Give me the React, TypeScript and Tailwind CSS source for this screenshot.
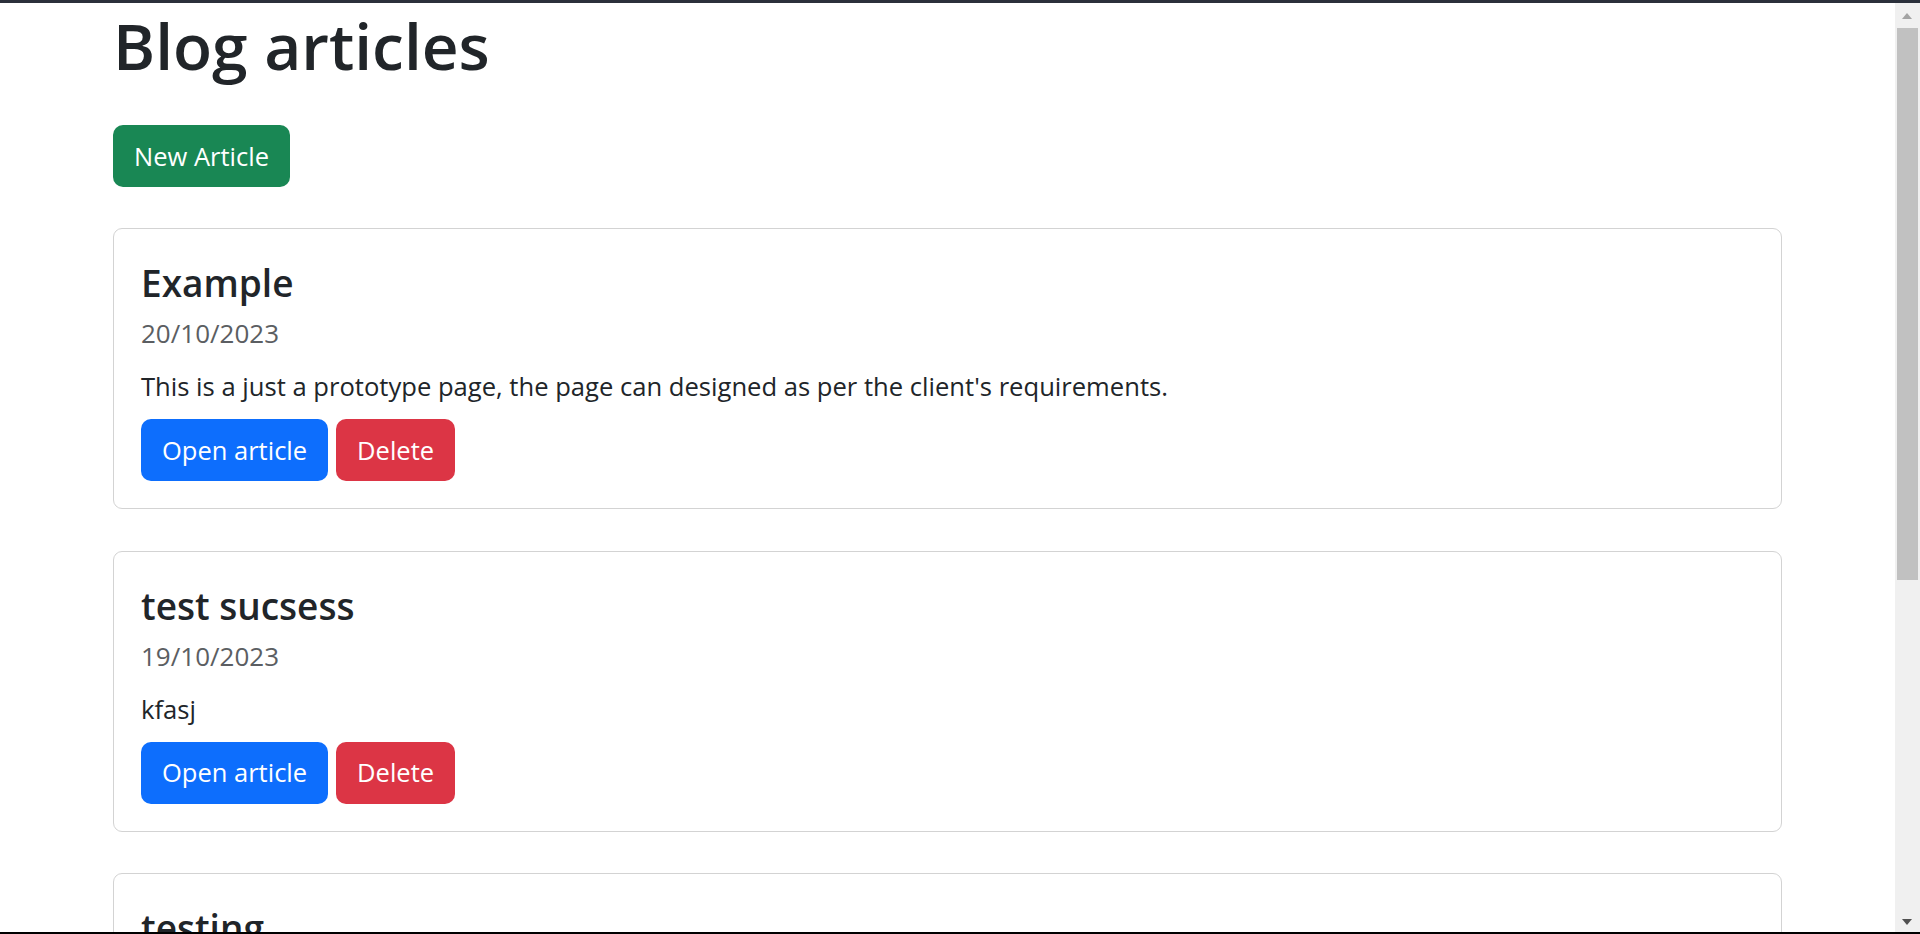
import React from "react";

type Article = {
  title: string;
  date: string;
  body: string;
};

const articles: Article[] = [
  {
    title: "Example",
    date: "20/10/2023",
    body: "This is a just a prototype page, the page can designed as per the client's requirements.",
  },
  { title: "test sucsess", date: "19/10/2023", body: "kfasj" },
  { title: "testing", date: "18/10/2023", body: "testing" },
];

const ArticleCard = ({ article }: { article: Article }) => {
  return (
    <div className="shrink-0 rounded-[9px] border border-[#d3d3d3] bg-white p-[27px]">
      <h2 className="text-[37px] font-semibold leading-[53px] text-[#212529]">
        {article.title}
      </h2>
      <div className="mt-[6px] text-[26px] leading-[36px] text-[#5b5e62]">
        {article.date}
      </div>
      <p className="mt-[17px] text-[25.6px] leading-[38px] text-[#212529]">
        {article.body}
      </p>
      <div className="mt-[13px] flex gap-[8px]">
        <button className="flex h-[62px] items-center rounded-[10px] bg-[#0d6efd] px-[21px] text-[25.5px] text-white">
          Open article
        </button>
        <button className="flex h-[62px] items-center rounded-[10px] bg-[#dc3545] px-[21px] text-[25.5px] text-white">
          Delete
        </button>
      </div>
    </div>
  );
};

const Scrollbar = () => {
  return (
    <div className="relative w-[25px] shrink-0 bg-[#f0f0f0]">
      {/* up arrow */}
      <div className="absolute left-[7px] top-[10px] h-0 w-0 border-x-[5.5px] border-b-[6px] border-x-transparent border-b-[#a3a3a3]" />
      {/* thumb */}
      <div className="absolute left-[2px] top-[25px] h-[552px] w-[21px] bg-[#c1c1c1]" />
      {/* down arrow */}
      <div className="absolute bottom-[7px] left-[7px] h-0 w-0 border-x-[5.5px] border-t-[6px] border-x-transparent border-t-[#505050]" />
    </div>
  );
};

export default function App() {
  return (
    <div
      className="flex h-[934px] flex-col overflow-hidden bg-white"
      style={{ fontFamily: '"Open Sans", "Noto Sans", sans-serif' }}
    >
      <div className="h-[3px] shrink-0 bg-[#2b303b]" />
      <div className="flex min-h-0 flex-1">
        <main className="min-w-0 flex-1 overflow-hidden px-[113px]">
          <h1 className="mt-[4px] text-[64px] font-semibold leading-[78px] text-[#212529]">
            Blog articles
          </h1>
          <button className="mt-[40px] flex h-[62px] items-center rounded-[10px] bg-[#198754] px-[21px] text-[25.5px] text-white">
            New Article
          </button>
          <div className="mt-[41px] flex flex-col gap-[41.5px]">
            {articles.map((a) => (
              <ArticleCard key={a.title} article={a} />
            ))}
          </div>
        </main>
        <Scrollbar />
      </div>
      <div className="h-[2px] shrink-0 bg-black" />
    </div>
  );
}
